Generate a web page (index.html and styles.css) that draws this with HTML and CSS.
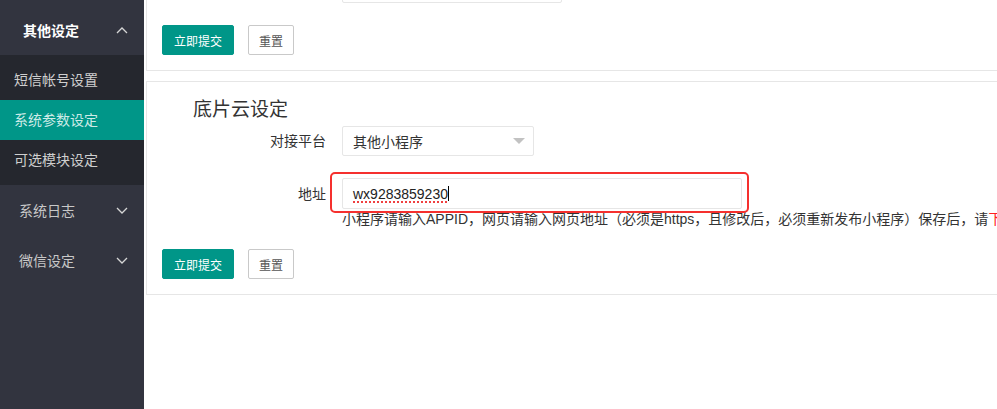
FILE: index.html
```html
<!DOCTYPE html>
<html lang="zh-CN">
<head>
    <meta charset="UTF-8">
    <meta name="viewport" content="width=device-width, initial-scale=1.0">
    <title>系统参数设定</title>
    <link rel="stylesheet" href="styles.css">
</head>
<body>

<div class="layout">
    <aside class="side">
        <ul class="nav">
            <li class="nav-item">
                <a class="nav-title nav-head">其他设定
                    <svg class="chev" viewBox="0 0 12 7"><polyline points="1,6 6,1 11,6"/></svg>
                </a>
                <ul class="nav-child">
                    <li><a>短信帐号设置</a></li>
                    <li class="active"><a>系统参数设定</a></li>
                    <li><a>可选模块设定</a></li>
                </ul>
            </li>
            <li class="nav-item">
                <a class="nav-title">系统日志
                    <svg class="chev" viewBox="0 0 12 7"><polyline points="1,1 6,6 11,1"/></svg>
                </a>
            </li>
            <li class="nav-item">
                <a class="nav-title">微信设定
                    <svg class="chev" viewBox="0 0 12 7"><polyline points="1,1 6,6 11,1"/></svg>
                </a>
            </li>
        </ul>
    </aside>

    <main class="main">
        <div class="card card-top">
            <div class="form-row">
                <label class="form-label"></label>
                <div class="input input-short"></div>
            </div>
            <div class="btn-row">
                <button class="btn">立即提交</button>
                <button class="btn btn-primary-outline">重置</button>
            </div>
        </div>

        <div class="card">
            <h3 class="card-title">底片云设定</h3>
            <div class="form-row">
                <label class="form-label">对接平台</label>
                <div class="select">
                    <span>其他小程序</span>
                    <i class="caret"></i>
                </div>
            </div>
            <div class="form-row row-addr">
                <label class="form-label">地址</label>
                <div class="form-block">
                    <div class="mark-wrap">
                        <div class="input input-long"><span class="typed">wx9283859230</span><span class="cursor"></span></div>
                        <span class="mark"></span>
                    </div>
                    <div class="help">小程序请输入APPID，网页请输入网页地址（必须是https，且修改后，必须重新发布小程序）保存后，请<span class="red">下载小程序代码</span></div>
                </div>
            </div>
            <div class="btn-row">
                <button class="btn">立即提交</button>
                <button class="btn btn-primary-outline">重置</button>
            </div>
        </div>
    </main>
</div>

</body>
</html>
```

FILE: styles.css
```css
html, body {
    margin: 0;
    padding: 0;
    height: 100%;
    overflow: hidden;
    background: #fff;
    font-family: "Liberation Sans", "Noto Sans CJK SC", sans-serif;
    font-size: 14px;
    color: #333;
}
ul { list-style: none; margin: 0; padding: 0; }
a { text-decoration: none; color: inherit; }

.layout {
    display: flex;
    height: 100vh;
}

/* sidebar */
.side {
    width: 144px;
    flex-shrink: 0;
    background: #32343f;
}
.nav-title {
    display: flex;
    align-items: center;
    justify-content: space-between;
    height: 50px;
    padding: 0 16px 0 19px;
    color: #c8c8c8;
}
.nav-head {
    height: 55px;
    padding-top: 5px;
    padding-left: 23px;
    box-sizing: border-box;
    color: #fff;
    font-weight: bold;
}
.chev {
    width: 12px;
    height: 7px;
    fill: none;
    stroke: #d6d6d6;
    stroke-width: 1.3;
}
.nav-child {
    background: #25272e;
    padding: 5px 0;
}
.nav-child a {
    display: block;
    height: 40px;
    line-height: 40px;
    padding-left: 14px;
    color: #cfcfcf;
}
.nav-child .active a {
    background: #009688;
    color: #cdebe7;
}

/* main */
.main {
    flex: 1;
    min-width: 0;
    overflow: hidden;
    padding-left: 2px;
}
.card {
    width: 1000px;
    border: 1px solid #e6e6e6;
    padding: 15px;
    background: #fff;
}
.card-top {
    margin-top: -43px;
}
.card + .card {
    margin-top: 10px;
}
.card-title {
    margin: 0 0 3px 31px;
    font-size: 19px;
    font-weight: normal;
    line-height: 26px;
    color: #333;
}

.form-row {
    display: flex;
    align-items: flex-start;
    margin-bottom: 22px;
}
.form-label {
    width: 180px;
    box-sizing: border-box;
    padding-right: 16px;
    text-align: right;
    line-height: 30px;
}
.row-addr .form-label {
    line-height: 33px;
}
.row-addr {
    margin-bottom: 20px;
}

.input, .select {
    box-sizing: border-box;
    border: 1px solid #e6e6e6;
    border-radius: 2px;
    background: #fff;
    display: flex;
    align-items: center;
    padding-left: 10px;
}
.input-short {
    width: 220px;
    height: 30px;
}
.select {
    width: 192px;
    height: 30px;
    justify-content: space-between;
}
.caret {
    border-left: 6px solid transparent;
    border-right: 6px solid transparent;
    border-top: 6px solid #c2c2c2;
    margin-right: 8px;
}
.input-long {
    width: 400px;
    height: 31px;
    color: #222;
}
.typed {
    text-decoration: underline dotted #f04040;
    text-decoration-thickness: 2px;
    text-underline-offset: 3px;
}
.cursor {
    display: inline-block;
    width: 1px;
    height: 15px;
    background: #000;
}

.mark-wrap {
    position: relative;
    width: 400px;
}
.mark {
    position: absolute;
    left: -12px;
    top: -6px;
    right: -7px;
    bottom: -4px;
    border: 2px solid #f5302e;
    border-radius: 5px;
}
.help {
    line-height: 20px;
    white-space: nowrap;
    color: #333;
}
.red { color: #ff2020; }

.btn-row {
    display: flex;
    gap: 14px;
}
.btn {
    height: 30px;
    padding: 0 11px;
    font-size: 12px;
    font-family: inherit;
    border: 1px solid #009688;
    border-radius: 2px;
    background: #009688;
    color: #fff;
    cursor: pointer;
}
.btn-primary-outline {
    background: #fff;
    border-color: #c9c9c9;
    color: #555;
    padding: 0 10px;
}
```
